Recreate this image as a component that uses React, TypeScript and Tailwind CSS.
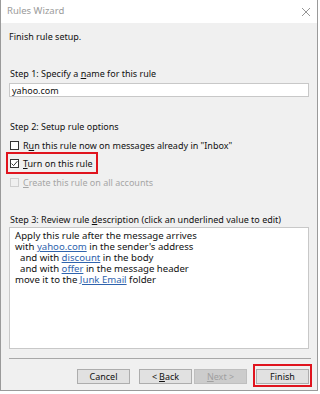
import React from "react";

const font = { fontFamily: '"Noto Sans", "Open Sans", sans-serif' };

function Check({ checked, disabled }: { checked?: boolean; disabled?: boolean }) {
  return (
    <div
      className={`w-[9px] h-[9px] border flex items-center justify-center ${
        disabled ? "border-[#cfcfcf] bg-[#f0f0f0]" : "border-[#333] bg-white"
      }`}
    >
      {checked && (
        <svg width="7" height="7" viewBox="0 0 7 7">
          <path d="M0.6 3.6 L2.6 5.6 L6.4 1.2" stroke="#333" strokeWidth="1" fill="none" />
        </svg>
      )}
    </div>
  );
}

function Btn({ children, disabled }: { children: React.ReactNode; disabled?: boolean }) {
  return (
    <div
      className={`w-[53px] h-[15px] border flex items-center justify-center text-[9px] leading-none ${
        disabled
          ? "bg-[#cccccc] border-[#bfbfbf] text-[#a0a0a0]"
          : "bg-[#e1e1e1] border-[#adadad] text-[#111]"
      }`}
    >
      {children}
    </div>
  );
}

export default function App() {
  return (
    <div className="w-[320px] h-[394px] bg-white overflow-hidden text-[#111]" style={font}>
      <div className="w-[318px] h-[391px] border-x border-b border-[#9a9a9a] flex flex-col">
        <div className="h-[23px] bg-white flex items-center justify-between pl-[6px] pr-[6px]">
          <span className="text-[9.5px] text-[#9a9a9a]">Rules Wizard</span>
          <svg width="10" height="10" viewBox="0 0 10 10">
            <path d="M1 1 L9 9 M9 1 L1 9" stroke="#8a8a8a" strokeWidth="0.9" />
          </svg>
        </div>
        <div className="flex-1 bg-[#f0f0f0] flex flex-col px-[8px] text-[9px] leading-[11px]">
          <div className="mt-[8px]">Finish rule setup.</div>
          <div className="mt-[26px] ml-[1px]">
            Step 1: Specify a <span className="underline">n</span>ame for this rule
          </div>
          <div className="mt-[4px] h-[14px] w-[300px] bg-white border border-[#c8c8c8] flex items-center pl-[2px]">
            yahoo.com
          </div>
          <div className="mt-[24px] ml-[1px]">Step 2: Setup rule options</div>
          <div className="mt-[7px] flex items-center gap-[4px] h-[12px] ml-[1px]">
            <Check />
            <span>
              R<span className="underline">u</span>n this rule now on messages already in "Inbox"
            </span>
          </div>
          <div className="relative mt-[6px] flex items-center gap-[4px] h-[12px] ml-[1px]">
            <Check checked />
            <span>
              <span className="underline">T</span>urn on this rule
            </span>
            <div className="absolute left-[-4px] top-[-5px] w-[92px] h-[22px] border-2 border-[#e0141e]" />
          </div>
          <div className="mt-[7px] flex items-center gap-[4px] h-[12px] ml-[1px] text-[#a6a6a6]">
            <Check disabled />
            <span>
              <span className="underline">C</span>reate this rule on all accounts
            </span>
          </div>
          <div className="mt-[26px] ml-[1px]">
            Step 3: Review rule <span className="underline">d</span>escription (click an underlined value to edit)
          </div>
          <div className="mt-[2px] h-[122px] w-[300px] bg-white border border-[#c8c8c8] pl-[5px] pt-[2px] text-[9.6px] leading-[11px]">
            <div>Apply this rule after the message arrives</div>
            <div>
              with <span className="text-[#2f63ad] underline">yahoo.com</span> in the sender's address
            </div>
            <div className="pl-[5px]">
              and with <span className="text-[#2f63ad] underline">discount</span> in the body
            </div>
            <div className="pl-[5px]">
              and with <span className="text-[#2f63ad] underline">offer</span> in the message header
            </div>
            <div>
              move it to the <span className="text-[#2f63ad] underline">Junk Email</span> folder
            </div>
          </div>
          <div className="mt-[9px] h-px w-[302px] bg-[#a8a8a8]" />
          <div className="mt-[10px] flex justify-end pr-[0px] gap-[4px]">
            <Btn>Cancel</Btn>
            <div className="flex ml-[5px] gap-[2px]">
              <Btn>
                &lt; <span className="underline ml-[2px]">B</span>ack
              </Btn>
              <Btn disabled>
                <span className="underline">N</span>ext &gt;
              </Btn>
            </div>
            <div className="relative ml-[5px]">
              <Btn>Finish</Btn>
              <div className="absolute left-[-3px] top-[-5px] w-[59px] h-[23px] border-2 border-[#e0141e]" />
            </div>
          </div>
        </div>
      </div>
    </div>
  );
}
